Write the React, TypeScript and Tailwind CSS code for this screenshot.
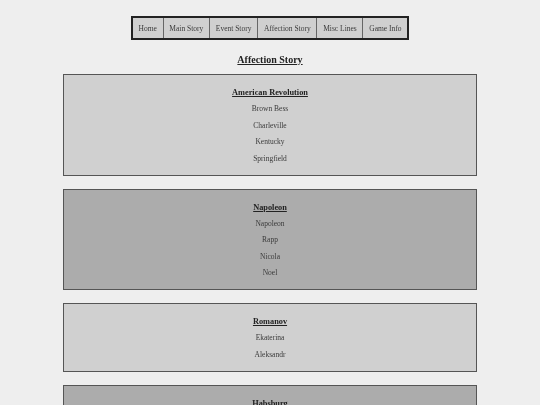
import React from "react";

const navItems = ["Home", "Main Story", "Event Story", "Affection Story", "Misc Lines", "Game Info"];

const groups: { name: string; members: string[] }[] = [
  { name: "American Revolution", members: ["Brown Bess", "Charleville", "Kentucky", "Springfield"] },
  { name: "Napoleon", members: ["Napoleon", "Rapp", "Nicola", "Noel"] },
  { name: "Romanov", members: ["Ekaterina", "Aleksandr"] },
  { name: "Habsburg", members: ["Maria", "Joseph"] },
];

export default function App() {
  return (
    <div
      className="min-h-[405px] bg-[#eeeeee] pt-[16px] text-[#333] antialiased [will-change:transform]"
      style={{ fontFamily: '"Liberation Serif", "Times New Roman", serif' }}
    >
      <nav className="flex justify-center">
        <ul className="flex border-2 border-[#222] bg-[#d0d0d0]">
          {navItems.map((item, i) => (
            <li
              key={item}
              className={`flex h-[20px] items-center px-[5.75px] pt-[1px] text-[7.5px] text-[#3a3a3a] ${
                i > 0 ? "border-l border-[#666]" : ""
              }`}
            >
              {item}
            </li>
          ))}
        </ul>
      </nav>

      <h1 className="mt-[13px] text-center text-[10px] font-bold leading-[14px] text-[#222] underline">
        Affection Story
      </h1>

      <div className="mx-auto mt-[7px] flex w-[414px] flex-col gap-[13px]">
        {groups.map((g, i) => (
          <section
            key={g.name}
            className={`flex flex-col items-center border border-[#555] pt-[11px] pb-[7.5px] ${
              i % 2 === 0 ? "bg-[#d0d0d0]" : "bg-[#acacac]"
            }`}
          >
            <h2 className="text-[8.3px] font-bold leading-[14px] text-[#222] underline">{g.name}</h2>
            <div className="mt-[1px] flex flex-col items-center">
              {g.members.map((m) => (
                <p key={m} className="text-[7.5px] leading-[16.5px] text-[#3a3a3a]">
                  {m}
                </p>
              ))}
            </div>
          </section>
        ))}
      </div>
    </div>
  );
}
